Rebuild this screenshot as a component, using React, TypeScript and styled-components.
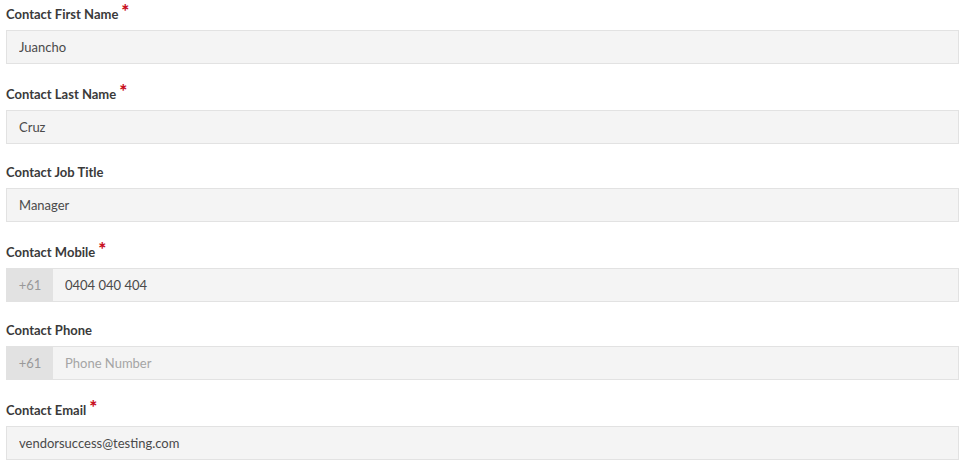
import React from "react"
import styled, { createGlobalStyle } from "styled-components"

const GlobalStyle = createGlobalStyle`
  body {
    margin: 0;
    background: #fff;
    font-family: Lato, "Open Sans", Arial, sans-serif;
  }
`

const fields = [
  { label: "Contact First Name", value: "Juancho", required: true },
  { label: "Contact Last Name", value: "Cruz", required: true },
  { label: "Contact Job Title", value: "Manager", required: false },
  { label: "Contact Mobile", value: "0404 040 404", required: true, prefix: "+61" },
  { label: "Contact Phone", value: "", placeholder: "Phone Number", required: false, prefix: "+61" },
  { label: "Contact Email", value: "vendorsuccess@testing.com", required: true },
]

const App = () => {
  return (
    <>
      <GlobalStyle />
      <Form>
        {fields.map(f => (
          <Field key={f.label}>
            <Label $required={f.required}>
              {f.label}
              {f.required && <Star>*</Star>}
            </Label>
            <InputGroup>
              {f.prefix && <Prefix>{f.prefix}</Prefix>}
              <Input defaultValue={f.value} placeholder={f.placeholder} readOnly />
            </InputGroup>
          </Field>
        ))}
      </Form>
    </>
  )
}

export default App

const Form = styled.div`
  display: flex;
  flex-direction: column;
  gap: 20px;
  padding: 4px 6px 0 6px;
  width: 953px;
`
const Field = styled.div`
  display: flex;
  flex-direction: column;
`
const Label = styled.label`
  display: block;
  height: 16px;
  padding-top: ${p => (p.$required ? "2px" : "0")};
  margin-bottom: 8px;
  font-size: 13px;
  line-height: 16px;
  font-weight: 700;
  color: #3a3a3a;
`
const Star = styled.span`
  display: inline-block;
  line-height: 0;
  position: relative;
  top: -1px;
  margin-left: 3px;
  color: #c8101e;
  font-size: 19px;
  font-weight: 900;
`
const InputGroup = styled.div`
  display: flex;
  height: 34px;
  box-sizing: border-box;
  border: 1px solid #e2e2e2;
  background: #f4f4f4;
`
const Prefix = styled.span`
  display: flex;
  align-items: center;
  justify-content: center;
  width: 46px;
  background: #e2e2e2;
  color: #999;
  font-size: 13px;
`
const Input = styled.input`
  flex: 1;
  border: none;
  outline: none;
  background: transparent;
  padding: 0 12px;
  font-family: Lato, "Open Sans", Arial, sans-serif;
  font-size: 13px;
  color: #4a4a4a;

  &::placeholder {
    color: #a5a5a5;
  }
`
